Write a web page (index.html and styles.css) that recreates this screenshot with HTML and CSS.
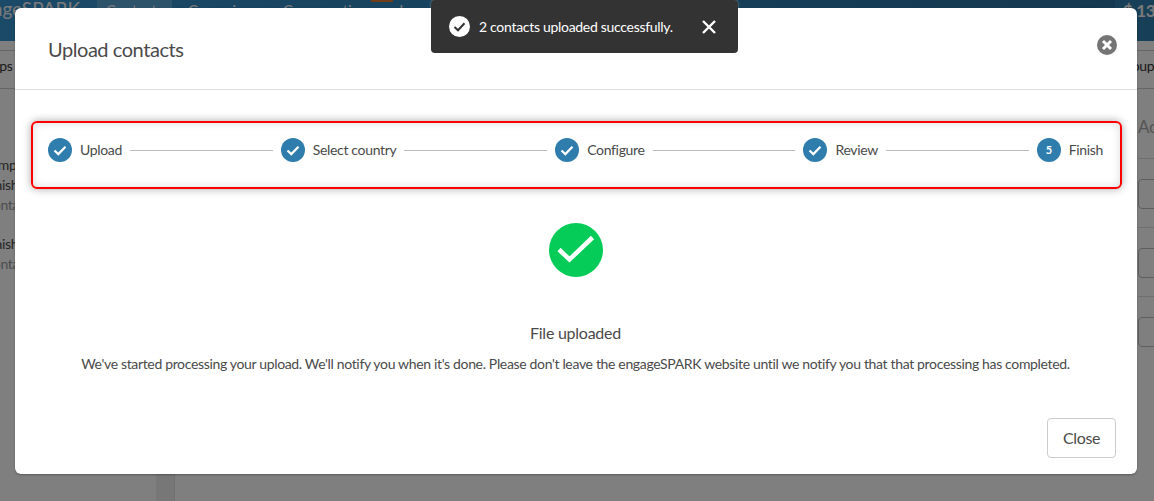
FILE: index.html
```html
<!DOCTYPE html>
<html lang="en">
<head>
    <meta charset="UTF-8">
    <title>Upload contacts</title>
    <link rel="stylesheet" href="styles.css">
</head>
<body>
    <header class="topbar">
        <div class="logo">engageSPARK</div>
        <nav class="nav">
            <a class="nav-item active">Contacts</a>
            <a class="nav-item">Campaigns</a>
            <a class="nav-item">Conversations<span class="nav-badge"></span></a>
            <a class="nav-item">Logs</a>
        </nav>
        <div class="balance">$ 13.50</div>
    </header>
    <div class="subbar">
        <span class="subbar-left">Groups</span>
        <span class="subbar-right">Groups</span>
    </div>
    <div class="page">
        <aside class="side">
            <div class="side-row">Sample</div>
            <div class="side-row">Finish</div>
            <div class="side-row muted">Contacts</div>
            <div class="side-gap"></div>
            <div class="side-row">Finish</div>
            <div class="side-row muted">Contacts</div>
        </aside>
        <div class="side-strip"></div>
        <section class="actions">
            <div class="actions-head">Actions</div>
            <div class="actions-row"><span class="drop"></span></div>
            <div class="actions-row"><span class="drop"></span></div>
            <div class="actions-row"><span class="drop"></span></div>
        </section>
    </div>

    <div class="overlay"></div>

    <div class="modal">
        <div class="modal-head">
            <h2>Upload contacts</h2>
            <button class="modal-close" aria-label="Close">
                <svg width="20" height="20" viewBox="0 0 20 20"><circle cx="10" cy="10" r="10" fill="#757575"/><path d="M6 6l8 8M14 6l-8 8" stroke="#fff" stroke-width="3" fill="none"/></svg>
            </button>
        </div>
        <div class="modal-body">
            <div class="steps">
                <div class="step">
                    <svg class="step-icon" viewBox="0 0 24 24"><circle cx="12" cy="12" r="12" fill="#2e7dac"/><path d="M6.500 12.500l3.800 3.600 7.200-7.400" stroke="#fff" stroke-width="2.200" fill="none"/></svg>
                    <span>Upload</span>
                </div>
                <div class="step-line"></div>
                <div class="step">
                    <svg class="step-icon" viewBox="0 0 24 24"><circle cx="12" cy="12" r="12" fill="#2e7dac"/><path d="M6.500 12.500l3.800 3.600 7.200-7.400" stroke="#fff" stroke-width="2.200" fill="none"/></svg>
                    <span>Select country</span>
                </div>
                <div class="step-line"></div>
                <div class="step">
                    <svg class="step-icon" viewBox="0 0 24 24"><circle cx="12" cy="12" r="12" fill="#2e7dac"/><path d="M6.500 12.500l3.800 3.600 7.200-7.400" stroke="#fff" stroke-width="2.200" fill="none"/></svg>
                    <span>Configure</span>
                </div>
                <div class="step-line"></div>
                <div class="step">
                    <svg class="step-icon" viewBox="0 0 24 24"><circle cx="12" cy="12" r="12" fill="#2e7dac"/><path d="M6.500 12.500l3.800 3.600 7.200-7.400" stroke="#fff" stroke-width="2.200" fill="none"/></svg>
                    <span>Review</span>
                </div>
                <div class="step-line"></div>
                <div class="step">
                    <div class="step-num">5</div>
                    <span>Finish</span>
                </div>
            </div>
            <div class="done">
                <svg class="done-icon" width="54" height="54" viewBox="0 0 54 54"><circle cx="27" cy="27" r="27" fill="#05cc58"/><path d="M10 26.500l10.500 10 23-22" stroke="#fff" stroke-width="4.500" fill="none"/></svg>
                <h3>File uploaded</h3>
                <p>We've started processing your upload. We'll notify you when it's done. Please don't leave the engageSPARK website until we notify you that that processing has completed.</p>
            </div>
        </div>
        <div class="modal-foot">
            <button class="btn">Close</button>
        </div>
    </div>

    <div class="toast">
        <svg width="21" height="21" viewBox="0 0 21 21"><circle cx="10.500" cy="10.500" r="10.500" fill="#fff"/><path d="M5.500 11l3.500 3.300 6.500-7" stroke="#333" stroke-width="2" fill="none"/></svg>
        <span>2 contacts uploaded successfully.</span>
        <svg class="toast-x" width="16" height="16" viewBox="0 0 16 16"><path d="M2 2l12 12M14 2L2 14" stroke="#fff" stroke-width="2.400" fill="none"/></svg>
    </div>
</body>
</html>
```

FILE: styles.css
```css
* {
    box-sizing: border-box;
}
html, body {
    height: 100%;
}
body {
    margin: 0;
    overflow: hidden;
    position: relative;
    font-family: Lato, "Noto Sans", Arial, sans-serif;
    font-size: 14px;
    letter-spacing: -0.34px;
    color: #4a4a4a;
    background-color: #fff;
}
.topbar {
    display: flex;
    height: 41px;
    background: linear-gradient(to right, #3694d0, #28709e);
    color: #f4f4f4;
}
.logo {
    width: 97px;
    flex-shrink: 0;
    direction: rtl;
    padding-right: 17px;
    font-size: 19px;
    line-height: 18px;
    letter-spacing: 0;
    overflow: hidden;
    white-space: nowrap;
}
.nav {
    display: flex;
    flex: 1;
}
.nav-item {
    position: relative;
    padding: 1px 9px 0;
    margin-right: 7px;
    font-size: 15px;
    line-height: 18px;
    letter-spacing: -0.2px;
}
.nav-item.active {
    background-color: #5aa6d6;
}
.nav-badge {
    position: absolute;
    top: 0;
    right: -10px;
    width: 22px;
    height: 2px;
    background-color: #e8772e;
}
.balance {
    width: 39px;
    padding: 0 0 0 8px;
    background-color: #2f7fb0;
    font-size: 17px;
    font-weight: bold;
    white-space: nowrap;
    overflow: hidden;
}
.subbar {
    display: flex;
    justify-content: space-between;
    height: 39px;
    margin-top: 9px;
    padding-top: 6px;
    border-top: 1px solid #ccc;
    border-bottom: 1px solid #ccc;
    color: #333;
}
.subbar-left {
    margin-left: -30px;
}
.subbar-right {
    margin-right: -6px;
}
.page {
    display: flex;
    height: 412px;
}
.side {
    width: 156px;
    padding-top: 67px;
    white-space: nowrap;
    flex-shrink: 0;
}
.side-row {
    height: 20px;
    margin-left: -16px;
}
.side-gap {
    height: 19px;
}
.muted {
    color: #999;
}
.side-strip {
    width: 19px;
    background-color: #eee;
    border-right: 1px solid #e2e2e2;
    flex-shrink: 0;
}
.actions {
    flex: 1;
    padding-left: 963px;
    overflow: hidden;
}
.actions-head {
    height: 69px;
    padding-top: 27px;
    font-size: 17px;
    color: #aaa;
    white-space: nowrap;
}
.actions-row {
    height: 69px;
    padding-top: 20px;
    border-top: 1px solid #ddd;
}
.drop {
    display: block;
    width: 40px;
    height: 30px;
    border: 1px solid #bbb;
    border-radius: 4px;
}
.overlay {
    position: absolute;
    inset: 0;
    background-color: rgba(0,0,0,0.5);
}
.modal {
    position: absolute;
    left: 15px;
    top: 8px;
    width: 1122px;
    height: 466px;
    display: flex;
    flex-direction: column;
    background-color: white;
    border-radius: 6px;
    box-shadow: 0 1px 2px rgba(0,0,0,0.3);
}
.modal-head {
    display: flex;
    justify-content: space-between;
    align-items: center;
    height: 82px;
    padding: 0 20px 0 33px;
    border-bottom: 1px solid #ddd;
}
.modal-head h2 {
    margin: 0;
    font-size: 20px;
    font-weight: normal;
    letter-spacing: -0.45px;
}
.modal-close {
    padding: 0;
    margin: 0 0 7px;
    border: none;
    background: none;
    line-height: 0;
}
.modal-body {
    flex: 1;
    padding: 31px 15px 0 16px;
}
.steps {
    display: flex;
    align-items: center;
    height: 68px;
    padding: 0 17px 10px 15px;
    border: 2px solid #f00;
    border-radius: 6px;
    box-shadow: 0 0 8px rgba(0,0,0,0.35), inset 0 0 8px rgba(0,0,0,0.15);
}
.step {
    display: flex;
    align-items: center;
    gap: 8px;
    white-space: nowrap;
}
.step span {
    padding-bottom: 2px;
}
.step-icon, .step-num {
    width: 24px;
    height: 24px;
    flex-shrink: 0;
}
.step-num {
    border-radius: 50%;
    background-color: #2e7dac;
    color: white;
    font-size: 11px;
    font-weight: bold;
    line-height: 24px;
    text-align: center;
}
.step-line {
    flex: 1;
    height: 1px;
    margin: 0 8px;
    background-color: #bbb;
}
.done {
    text-align: center;
    padding: 34px 2px 0 0;
}
.done-icon {
    display: block;
    margin: 0 auto;
}
.done h3 {
    margin: 46px 0 13px;
    font-size: 16px;
    font-weight: normal;
    letter-spacing: -0.25px;
}
.done p {
    margin: 0;
}
.modal-foot {
    display: flex;
    justify-content: flex-end;
    padding: 0 21px 16px;
}
.btn {
    width: 69px;
    height: 40px;
    padding: 0 0 2px;
    background-color: white;
    border: 1px solid #ccc;
    border-radius: 4px;
    font-family: inherit;
    font-size: 16px;
    letter-spacing: -0.34px;
    color: #4a4a4a;
}
.toast {
    position: absolute;
    left: 431px;
    top: 0;
    width: 307px;
    height: 53px;
    display: flex;
    align-items: center;
    padding: 0 21px 0 18px;
    background-color: #333;
    border-radius: 4px;
    box-shadow: 0 0 2px rgba(255,255,255,0.5);
    color: white;
    letter-spacing: -0.3px;
}
.toast span {
    margin-left: 9px;
}
.toast-x {
    margin-left: auto;
}
```
